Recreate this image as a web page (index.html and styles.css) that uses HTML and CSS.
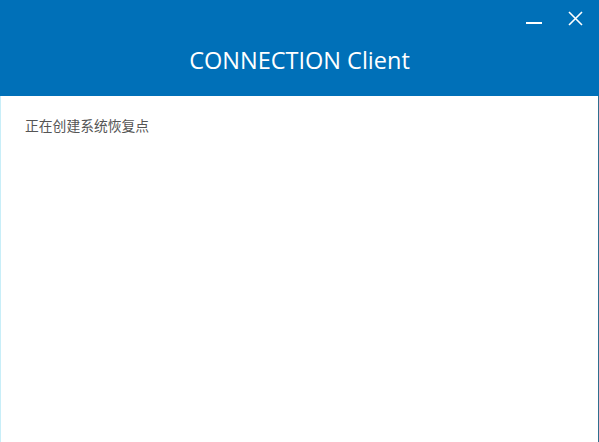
FILE: index.html
```html
<!DOCTYPE html>
<html lang="zh-CN">
<head>
  <meta charset="UTF-8">
  <title>CONNECTION Client</title>
  <link rel="stylesheet" href="styles.css">
</head>
<body>
  <div class="window">
    <!-- タイトルバー -->
    <div class="titlebar">
      <div class="controls">
        <span class="btn-min"></span>
        <svg class="btn-close" width="15" height="15" viewBox="0 0 15 15">
          <path d="M1 1 L14 14 M14 1 L1 14" stroke="#ffffff" stroke-width="1.6" fill="none"/>
        </svg>
      </div>
      <h1>CONNECTION Client</h1>
    </div>
    <div class="content">
      <p class="status">正在创建系统恢复点</p>
    </div>
  </div>
</body>
</html>
```

FILE: styles.css
```css
html, body {
  margin: 0;
  padding: 0;
  height: 100%;
  background: #fff;
}
.window {
  height: 100%;
  display: flex;
  flex-direction: column;
  border-left: 1px solid #c8eef8;
  border-right: 1px solid #2f6f8f;
  box-sizing: border-box;
}
.titlebar {
  background: #0070b8;
  height: 96px;
  flex-shrink: 0;
  display: flex;
  flex-direction: column;
  margin: 0 -1px;
}
.controls {
  display: flex;
  justify-content: flex-end;
  align-items: center;
  gap: 26px;
  padding: 11px 16px 0 0;
  height: 15px;
}
.btn-min {
  width: 16px;
  height: 2px;
  background: #fff;
  margin-top: 8px;
}
.titlebar h1 {
  margin: 19px 0 0;
  text-align: center;
  color: #fff;
  font-family: "Open Sans", "Noto Sans", sans-serif;
  font-weight: normal;
  font-size: 23.5px;
  line-height: 30px;
}
.content {
  flex: 1;
  padding: 19px 24px;
}
.status {
  margin: 0;
  font-family: "Noto Sans CJK SC", sans-serif;
  font-size: 13.8px;
  color: #555;
  line-height: 20px;
}
```
